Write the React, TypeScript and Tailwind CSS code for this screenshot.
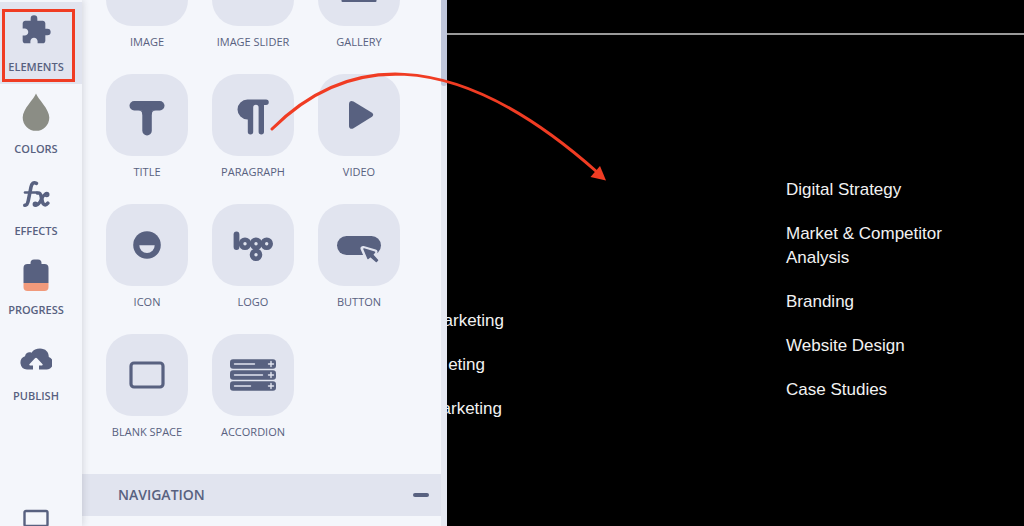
import type { ReactNode } from "react";
import { MdExtension } from "react-icons/md";

type Tool = {
  label: string;
  icon: ReactNode;
  iconBox: string;
  active?: boolean;
};

const TOOLS: Tool[] = [
  { label: "ELEMENTS", icon: <MdExtension size={32} />, iconBox: "h-14", active: true },
  { label: "COLORS", icon: <DropIcon />, iconBox: "h-14" },
  { label: "EFFECTS", icon: <EffectsIcon />, iconBox: "h-14" },
  { label: "PROGRESS", icon: <BatteryIcon />, iconBox: "h-[53px]" },
  { label: "PUBLISH", icon: <CloudIcon />, iconBox: "mt-1 h-14" },
];

const ELEMENTS: { label: string; icon: ReactNode }[] = [
  { label: "IMAGE", icon: null },
  { label: "IMAGE SLIDER", icon: null },
  { label: "GALLERY", icon: <GalleryIcon /> },
  { label: "TITLE", icon: <TitleIcon /> },
  { label: "PARAGRAPH", icon: <ParagraphIcon /> },
  { label: "VIDEO", icon: <VideoIcon /> },
  { label: "ICON", icon: <SmileIcon /> },
  { label: "LOGO", icon: <LogoIcon /> },
  { label: "BUTTON", icon: <ButtonIcon /> },
  { label: "BLANK SPACE", icon: <BlankIcon /> },
  { label: "ACCORDION", icon: <AccordionIcon /> },
];

const SERVICES = [
  "Digital Strategy",
  "Market & Competitor Analysis",
  "Branding",
  "Website Design",
  "Case Studies",
];

export default function App() {
  return (
    <div className="relative flex h-screen overflow-hidden bg-black font-['Open_Sans',sans-serif] text-[#586180]">
      <Sidebar />
      <ElementsPanel />
      <Canvas />
      <DragArrow />
    </div>
  );
}

function Sidebar() {
  return (
    <nav className="relative z-10 flex w-[82px] shrink-0 flex-col bg-[#f4f6fb] pt-0.5 shadow-[2px_0_6px_rgba(40,40,60,0.12)]">
      {TOOLS.map((t) => (
        <button
          key={t.label}
          className={`relative flex shrink-0 flex-col items-center pr-2.5 pb-2 ${
            t.active ? "bg-[#e1e4ef]" : ""
          }`}
        >
          <span className={`flex items-center justify-center ${t.iconBox}`}>{t.icon}</span>
          <span className="text-[11px] leading-[18px] font-semibold">{t.label}</span>
          {/* callout frame round the active tool */}
          {t.active && (
            <span className="absolute top-[7px] left-0.5 h-[73px] w-[73px] border-3 border-[#f03c23]" />
          )}
        </button>
      ))}
      <button aria-label="Desktop preview" className="mt-24 flex justify-center pr-2.5">
        <svg width="26" height="24" viewBox="0 0 26 24" fill="none" stroke="currentColor" strokeWidth="2.4">
          <rect x="1.5" y="2" width="23" height="15" rx="1.5" />
          <path d="M9 22h8" />
        </svg>
      </button>
    </nav>
  );
}

function ElementsPanel() {
  return (
    <aside className="flex w-[365px] shrink-0 overflow-hidden bg-[#f4f6fb]">
      <div className="min-w-0 flex-1">
        {/* scrolled part way down, so the first row is cut by the top edge */}
        <div className="-mt-14 grid grid-cols-[repeat(3,82px)] gap-6 px-6 pb-[34px]">
          {ELEMENTS.map((e) => (
            <button key={e.label} className="flex flex-col items-center gap-2">
              <span className="flex size-[82px] items-center justify-center rounded-[26px] bg-[#e1e4ef]">
                {e.icon}
              </span>
              <span className="text-[11px] leading-4 whitespace-nowrap">{e.label}</span>
            </button>
          ))}
        </div>
        <button className="flex h-[42px] w-full items-center justify-between bg-[#e1e4ef] pr-3 pl-9">
          <span className="text-sm font-semibold">NAVIGATION</span>
          <span className="h-1 w-4 rounded-full bg-[#586180]" />
        </button>
      </div>
      <div className="w-1.5 shrink-0 bg-[#e6e9f2]">
        <div className="h-[86px] rounded-b-full bg-[#bfc6db]" />
      </div>
    </aside>
  );
}

function Canvas() {
  return (
    <main className="min-w-0 flex-1 bg-black pt-[33px] font-['Liberation_Sans',Arial,sans-serif] text-[17px] leading-6 text-[#f2f2f2]">
      <hr className="border-t-2 border-[#9a9a9a]" />
      <div className="flex justify-between">
        <ul className="flex flex-col gap-5 pt-[274px]">
          <li className="flex w-[57px] justify-end overflow-hidden">arketing</li>
          <li className="flex w-[38px] justify-end overflow-hidden">eting</li>
          <li className="flex w-[55px] justify-end overflow-hidden">arketing</li>
        </ul>
        <ul className="flex w-[238px] flex-col gap-5 pt-[143px] pr-12">
          {SERVICES.map((s) => (
            <li key={s}>{s}</li>
          ))}
        </ul>
      </div>
    </main>
  );
}

function DragArrow() {
  return (
    <svg
      className="pointer-events-none absolute top-0 left-0 z-20"
      width="620"
      height="200"
      viewBox="0 0 620 200"
      fill="none"
    >
      <path d="M272 129C342 59 447 39 597 172" stroke="#f03c23" strokeWidth="3" strokeLinecap="round" />
      <path d="M606 180.500L600 166L590.500 177Z" fill="#f03c23" />
    </svg>
  );
}

function DropIcon() {
  return (
    <svg width="28" height="38" viewBox="0 0 28 38" fill="#8b8d85">
      <path d="M14 0.500C16 6 27.300 16 27.300 24.500A13.300 13.300 0 0 1 .7 24.500C.7 16 12 6 14 .5Z" />
    </svg>
  );
}

function EffectsIcon() {
  return (
    <svg
      width="28"
      height="28"
      viewBox="0 0 28 28"
      fill="none"
      stroke="currentColor"
      strokeWidth="3.600"
      strokeLinecap="round"
      strokeLinejoin="round"
    >
      <path d="M2.800 25.200C5 25.500 5.700 23.500 6.300 20.500L9 7C9.700 3.200 11.500 2 14.500 3.300" />
      <path d="M3 12.500H14.500" strokeWidth="2.600" />
      <path d="M15.500 13C18.500 12.500 18.800 14.500 19.300 17L20.200 21C20.900 25 23.500 26 25.800 23.200" />
      <path d="M25.300 14.200C22 13 20.500 17 19 20C17.500 23.500 15.500 25.500 12.800 24.500" strokeWidth="3.200" />
      <circle cx="24.800" cy="14.500" r="0.900" />
      <circle cx="13.300" cy="24.200" r="0.900" />
    </svg>
  );
}

function BatteryIcon() {
  return (
    <svg width="26" height="32" viewBox="0 0 26 32">
      <path
        d="M7.500 5V4A3.500 3.500 0 0 1 11 .5H15A3.500 3.500 0 0 1 18.500 4V5H21.500A4 4 0 0 1 25.500 9V24H.5V9A4 4 0 0 1 4.500 5Z"
        fill="currentColor"
      />
      <path d="M.5 24H25.500V28A4 4 0 0 1 21.500 32H4.500A4 4 0 0 1 .5 28Z" fill="#f19a7b" />
    </svg>
  );
}

function CloudIcon() {
  return (
    <svg width="32" height="22" viewBox="0 0 32 22" fill="currentColor">
      <path d="M7 21.500A6.800 6.800 0 0 1 5 8.300C5.500 4.800 9 3.600 11.500 4.800C13.300 1.800 16.500.5 20 .5C25.500.5 28.800 4 28.800 9A6.500 6.500 0 0 1 25.500 21.500H19V17.500H21.800C22.600 17.500 23 16.600 22.400 16L17 10.300C16.400 9.600 15.600 9.600 15 10.300L9.600 16C9 16.600 9.400 17.500 10.200 17.500H13V21.500Z" />
    </svg>
  );
}

function GalleryIcon() {
  return (
    <svg width="36" height="54" viewBox="0 0 36 54" fill="currentColor">
      <rect x="0.500" y="38" width="35" height="6" rx="1" />
      <rect x="0.500" y="8" width="35" height="26" rx="3" />
    </svg>
  );
}

function TitleIcon() {
  return (
    <svg className="mt-1.5" width="36" height="36" viewBox="0 0 36 36" fill="currentColor">
      <rect x="0.500" y="1" width="35" height="9.500" rx="4.700" />
      <rect x="13.300" y="5" width="9.500" height="30.500" rx="4.700" />
      <path d="M9.300 10.200H26.800C24 10.500 22.800 12 22.800 14.500H13.300C13.300 12 12.100 10.500 9.300 10.200Z" />
    </svg>
  );
}

function ParagraphIcon() {
  return (
    <svg className="mt-1" width="32" height="36" viewBox="0 0 32 36" fill="currentColor">
      <path d="M10.500.5H29A2.700 2.700 0 0 1 29 6H27V32.700A2.700 2.700 0 0 1 21.600 32.700V8.500A2.600 2.600 0 0 0 16.200 8.500V32.700A2.700 2.700 0 0 1 10.800 32.700V20.500H10.500A10 10 0 0 1 10.500.5Z" />
    </svg>
  );
}

function VideoIcon() {
  return (
    <svg className="ml-1" width="26" height="30" viewBox="0 0 26 30" fill="currentColor">
      <path d="M1 4C1 1.300 3.300.3 5.500 1.600L24 12.800C25.600 13.800 25.600 15.800 24 16.800L5.500 28.300C3.300 29.600 1 28.600 1 26Z" />
    </svg>
  );
}

function SmileIcon() {
  return (
    <svg width="28" height="28" viewBox="0 0 28 28" fill="none">
      <circle cx="14" cy="14" r="13.800" fill="currentColor" />
      <path d="M6.300 14.300H21.700A7.700 7.700 0 0 1 6.300 14.300Z" fill="#e1e4ef" />
    </svg>
  );
}

function LogoIcon() {
  return (
    <svg className="mt-0.5" width="40" height="32" viewBox="0 0 40 32" fill="none" stroke="currentColor">
      <path d="M3.500 4.500V17" strokeWidth="5.800" strokeLinecap="round" />
      <circle cx="12" cy="13.700" r="4" strokeWidth="4.600" />
      <circle cx="23" cy="13.700" r="4" strokeWidth="4.600" />
      <circle cx="33.700" cy="13.700" r="4" strokeWidth="4.600" />
      <circle cx="23" cy="24.800" r="4" strokeWidth="4.600" />
    </svg>
  );
}

function ButtonIcon() {
  return (
    <svg width="46" height="36" viewBox="0 0 46 36" fill="currentColor">
      <rect x="1" y="9" width="44" height="19" rx="9.500" />
      <path
        d="M27 21.500L39 25L36.500 27.500L42 33.500L40.500 35L34.500 29.500L31.500 32Z"
        stroke="#e1e4ef"
        strokeWidth="5"
        strokeLinejoin="round"
      />
      <path
        d="M28 22L38.500 25.300L36.500 27.700L41.500 33.300L40.300 34.500L34.500 29.500L32 31.500Z"
        stroke="currentColor"
        strokeWidth="1.500"
        strokeLinejoin="round"
      />
    </svg>
  );
}

function BlankIcon() {
  return (
    <svg width="36" height="28" viewBox="0 0 36 28" fill="none" stroke="currentColor" strokeWidth="3.200">
      <rect x="2" y="2" width="32" height="24" rx="3" />
    </svg>
  );
}

function AccordionIcon() {
  return (
    <svg width="46" height="32" viewBox="0 0 46 32">
      {[
        { y: 0, line: 20 },
        { y: 11, line: 28 },
        { y: 22, line: 16 },
      ].map((row) => (
        <g key={row.y} transform={`translate(0 ${row.y})`}>
          <rect x="0" y="0.200" width="46" height="9.600" rx="3" fill="currentColor" />
          <path
            d={`M4.500 5h${row.line}M38.500 5h5M41 2.500v5`}
            stroke="#e1e4ef"
            strokeWidth="1.400"
            strokeLinecap="round"
          />
        </g>
      ))}
    </svg>
  );
}
